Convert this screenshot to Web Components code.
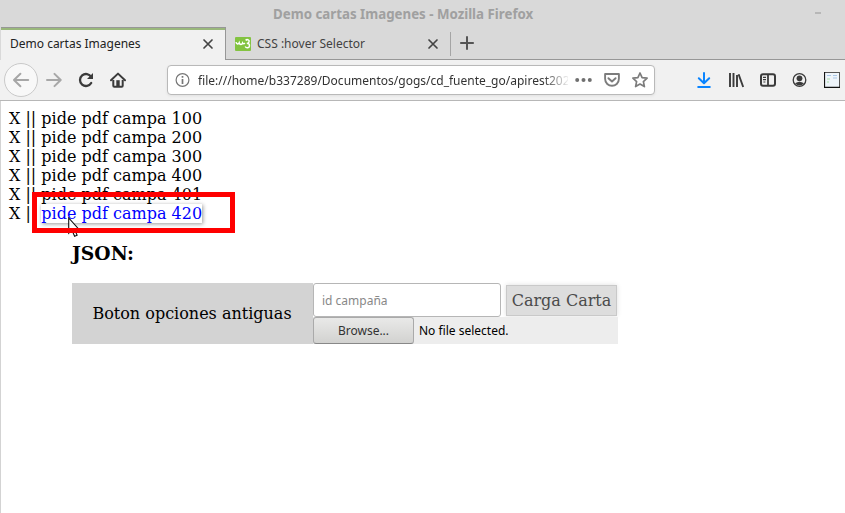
<!DOCTYPE html>
<html lang="es">
<head>
<meta charset="utf-8">
<title>Demo cartas Imagenes</title>
<style>
html,body{margin:0;height:100%;overflow:hidden;background:#fff}
</style>
</head>
<body>
<browser-window></browser-window>
<script>
const define = (name, html) => {
  const t = document.createElement('template');
  t.innerHTML = html.trim();
  customElements.define(name, class extends HTMLElement {
    constructor() {
      super();
      this.attachShadow({mode: 'open'}).appendChild(t.content.cloneNode(true));
    }
  });
};

define('title-bar', `
<style>
:host{display:flex;height:27px;box-sizing:border-box;padding:4px 0 0 273px;background:#d9d9d9;color:#a0a0a0;font:bold 13.3px/20px "Noto Sans",sans-serif;white-space:nowrap}
.t{width:260px}
i{width:6px;height:2px;background:#b7b7b7;margin:8px 0 0 282px}
</style><span class="t"><slot></slot></span><i></i>`);

define('browser-tab', `
<style>
:host{display:flex;box-sizing:border-box;height:33px;padding:8px 11px 0 9px;color:#424242;font:12px/18px "Noto Sans",sans-serif;white-space:nowrap;border-bottom:1px solid #979797}
:host([active]){width:225px;background:#f1f1f1;border-top:1px solid #979797;border-right:1px solid #979797;border-bottom:0;box-shadow:inset 0 2px #9ab87c;color:#222;padding-top:7px}
:host([idle]){width:224px}
.label{flex:1}
svg{width:12px;height:12px;margin-top:3px}
:host([idle]) .label{padding-left:6px}
</style>
<slot name="icon"></slot><span class="label"><slot></slot></span>
<svg viewBox="0 0 12 12" fill="none" stroke="#444" stroke-width="1.7" stroke-linecap="round"><path d="M2 2l8 8M10 2l-8 8"/></svg>`);

define('tab-strip', `
<style>
:host{display:flex;height:33px;background:#d9d9d9;padding-left:1px}
.rest{flex:1;border-bottom:1px solid #979797;display:flex;box-sizing:border-box}
.sep{width:1px;height:24px;background:#a5a5a5;margin-top:5px}
.plus{margin:9px 0 0 9px}
.w3{display:block;margin-top:1px}
</style>
<browser-tab active>Demo cartas Imagenes</browser-tab>
<browser-tab idle>
<svg class="w3" slot="icon" width="16" height="16" viewBox="0 0 16 16"><rect y="1" width="16" height="14" rx="1" fill="#83c341"/><path d="M1 6.2c.4 2 2.4 2.4 3.2.6.6 2.2 2.8 2.2 3.4.2.5.9 1.6.9 2.2 0M10.6 4.4c1.6-1.6 4.3-.4 3.4 1.6-.4.9-1.4 1.3-2.2 1.3 2 0 3 1.2 2.6 2.9-.5 1.9-3.1 2.3-4.2.3" fill="none" stroke="#fff" stroke-width="1.5"/></svg>CSS :hover Selector</browser-tab>
<div class="rest"><div class="sep"></div><svg class="plus" width="15" height="15" viewBox="0 0 15 15"><path d="M7 .2v13.6M.2 7h13.6" stroke="#555" stroke-width="2"/></svg></div>`);

define('url-field', `
<style>
:host{display:flex;box-sizing:border-box;width:488px;height:30px;border:1px solid #b9b9b9;border-radius:4px;background:#fff;align-items:center;padding-left:7px;box-shadow:0 1px 3px #0001}
.url{width:370px;overflow:hidden;white-space:nowrap;font:12px/18px "Noto Sans",sans-serif;color:#333;margin:1px 7px 0 7px;-webkit-mask-image:linear-gradient(90deg,#000 345px,transparent 372px)}
svg{flex:none}
.p{margin-left:11px}.s{margin-left:10px}
</style>
<svg width="16" height="16" viewBox="0 0 16 16"><circle cx="7.5" cy="8" r="6.4" fill="none" stroke="#777" stroke-width="1.2"/><path d="M7.5 7v5M7.5 4v1.7" stroke="#777" stroke-width="1.7"/></svg>
<span class="url"><slot></slot></span>
<svg width="17" height="16" viewBox="0 0 17 16" fill="#707070"><circle cx="2.2" cy="8" r="2"/><circle cx="8.5" cy="8" r="2"/><circle cx="14.8" cy="8" r="2"/></svg>
<svg class="p" width="18" height="16" viewBox="0 0 18 16" fill="none" stroke="#7c7c7c" stroke-width="1.9"><path d="M2.1 2h13.8v4.8c0 9.3-13.8 9.3-13.8 0z" stroke-linejoin="round"/><path d="M5.4 6.2L9 9.5l3.6-3.3" stroke-linecap="round" stroke-linejoin="round"/></svg>
<svg class="s" width="18" height="18" viewBox="0 0 18 18"><path d="M9 2l2.1 4.6 5 .6-3.7 3.4 1 5L9 13.1l-4.4 2.5 1-5L1.9 7.2l5-.6z" fill="none" stroke="#7c7c7c" stroke-width="1.7" stroke-linejoin="round"/></svg>`);

define('nav-bar', `
<style>
:host{display:flex;align-items:center;box-sizing:border-box;height:41px;border-bottom:1px solid #b7b7b7;background:#f1f1f1;padding-left:4px;color:#3b3b3b}
svg{flex:none;fill:none;stroke:currentColor;stroke-width:2}
.back{width:32px;height:32px;border:1px solid #c9c9c9;border-radius:50%;background:#f8f8f8;display:flex;align-items:center;justify-content:center;color:#a7a7a7}
.fw{color:#a7a7a7;margin-left:8px}.re{margin-left:16px}.ho{margin-left:16px}
url-field{margin-left:41px}
.dl{margin-left:41px;color:#0a84ff}.li{margin-left:16px}.si{margin-left:15px}.ac{margin-left:15px}.ex{margin-left:17px}
</style>
<div class="back"><svg width="18" height="16" viewBox="0 0 18 16"><path d="M16.2 8H2.2M8.4 1.7L2 8l6.4 6.3" stroke-linecap="round" stroke-linejoin="round"/></svg></div>
<svg class="fw" width="16" height="16" viewBox="0 0 16 16"><path d="M1 8h13.5M8.5 1.9L14.7 8l-6.2 6.1" stroke-linecap="round" stroke-linejoin="round"/></svg>
<svg class="re" width="16" height="16" viewBox="0 0 16 16"><path d="M13.2 11a6 6 0 1 1 0-6" stroke-width="2.3" stroke-linecap="round"/><path d="M15 1v6H9z" fill="currentColor" stroke="none"/></svg>
<svg class="ho" width="16" height="16" viewBox="0 0 16 16"><path d="M1 8.3L8 1.6l7 6.7" stroke-linecap="round" stroke-linejoin="round"/><path d="M3.3 8v5.8q0 1 1 1h7.4q1 0 1-1V8" /><path d="M6.3 8.2h3.4v6H6.3z" fill="currentColor" stroke="none"/></svg>
<url-field>file:///home/b337289/Documentos/gogs/cd_fuente_go/apirest202</url-field>
<svg class="dl" width="16" height="16" viewBox="0 0 16 16"><path d="M8 1v9.8M2.8 6.2L8 11.2l5.2-5M2.2 15h11.6" stroke-linecap="round" stroke-linejoin="round"/></svg>
<svg class="li" width="16" height="16" viewBox="0 0 16 16"><path d="M2 1v14M5.5 1v14M9 3v12M10.6 2.2L15.2 15" stroke-width="1.9"/></svg>
<svg class="si" width="18" height="16" viewBox="0 0 18 16"><rect x="2" y="2.2" width="14" height="11.6" rx="2"/><path d="M9 2v12" stroke-width="1.8"/><path d="M4 5.3h3M4 7.7h3M4.4 10h2" stroke-width="1.2"/></svg>
<svg class="ac" width="15" height="16" viewBox="0 0 15 16"><circle cx="7.5" cy="8" r="6.3" stroke-width="1.3"/><circle cx="7.5" cy="6.3" r="2.9" fill="currentColor" stroke="none"/><path d="M3 11.2q4.5-3 9 0-4.5 4.4-9 0z" fill="currentColor" stroke="none"/></svg>
<svg class="ex" width="16" height="16" viewBox="0 0 16 16"><rect width="16" height="16" fill="#eef4fa" stroke="none"/><path d="M0 .5h16M15.5 0v16" stroke="#555" stroke-width="1"/><path d="M0 15.4h16M.5 0v16" stroke="#111" stroke-width="1.2"/><path d="M3 3.5h4M9 3.5h4M9 6h4" stroke="#a9c7e8" stroke-width="1"/><path d="M3 7h3M3 10h2" stroke="#a9dca5" stroke-width="1"/></svg>`);

define('campaign-row', `
<style>
:host{display:block;height:19px;line-height:19px;white-space:pre}
:host([hovered]) .link{color:#00f;background:#fff;position:relative;box-shadow:1px 1px 4px #0006}
.link{display:inline-block;height:19px}
</style>X || <span class="link"><slot></slot></span>`);

define('mouse-pointer', `
<style>:host{position:absolute;left:68px;top:217px;width:14px;height:21px}</style>
<svg width="14" height="21" viewBox="0 0 14 21"><path d="M.7 1v15.2l3.3-3 2.6 6.1 2.5-1.1-2.5-5.8H11z" fill="#fff" fill-opacity=".85" stroke="#111" stroke-width="1.1"/></svg>`);

define('red-frame', `
<style>:host{position:absolute;left:32px;top:192px;width:203px;height:41px;box-sizing:border-box;border:5px solid #f00}</style>`);

define('upload-form', `
<style>
:host{display:flex;width:546px;height:61px;margin:19px 0 0 63px}
.name{width:241px;box-sizing:border-box;padding-right:1px;background:#d3d3d3;text-align:center;line-height:61px;white-space:nowrap}
.right{flex:1;display:flex;flex-direction:column}
.top{display:flex;height:34px}
input{box-sizing:border-box;width:188px;height:34px;border:1px solid #b6b6b6;border-radius:3px;padding:0 8px;font:12px "Noto Sans",sans-serif;background:#fff;margin:0}
input::placeholder{color:#888}
.load{margin:2px 0 0 5px;width:111px;height:31px;box-sizing:border-box;border:1px solid #c9c9c9;background:#ddd;color:#4b4b4b;text-align:center;line-height:29px;white-space:nowrap;box-shadow:0 0 5px #0002}
.file{flex:1;display:flex;background:#ededed;font:12px/27px "Noto Sans",sans-serif;color:#000}
.browse{box-sizing:border-box;width:101px;height:27px;border:1px solid #aaa;border-bottom-color:#888;border-radius:3px;background:linear-gradient(#e9e9e8,#d2d2d0);color:#333;text-align:center;line-height:25px;margin-right:5px}
</style>
<div class="name">Boton opciones antiguas</div>
<div class="right"><div class="top"><input placeholder="id campaña"><div class="load">Carga Carta</div></div>
<div class="file"><div class="browse">Browse...</div><span>No file selected.</span></div></div>`);

define('page-content', `
<style>
:host{display:block;flex:1;box-sizing:border-box;border-left:1px solid #d3d3d3;background:#fff;padding:8px 8px 0;font:16px/19px "DejaVu Serif",serif;color:#000}
h3{font-size:18.72px;line-height:22px;margin:19px 0 0 63px}
</style>
<campaign-row>pide pdf campa 100</campaign-row>
<campaign-row>pide pdf campa 200</campaign-row>
<campaign-row>pide pdf campa 300</campaign-row>
<campaign-row>pide pdf campa 400</campaign-row>
<campaign-row>pide pdf campa 401</campaign-row>
<campaign-row hovered>pide pdf campa 420</campaign-row>
<h3>JSON:</h3>
<upload-form></upload-form>`);

define('browser-window', `
<style>:host{display:flex;flex-direction:column;width:845px;height:513px;position:relative;overflow:hidden;background:#d9d9d9}</style>
<title-bar>Demo cartas Imagenes - Mozilla Firefox</title-bar>
<tab-strip></tab-strip>
<nav-bar></nav-bar>
<page-content></page-content>
<mouse-pointer></mouse-pointer>
<red-frame></red-frame>`);
</script>
</body>
</html>
